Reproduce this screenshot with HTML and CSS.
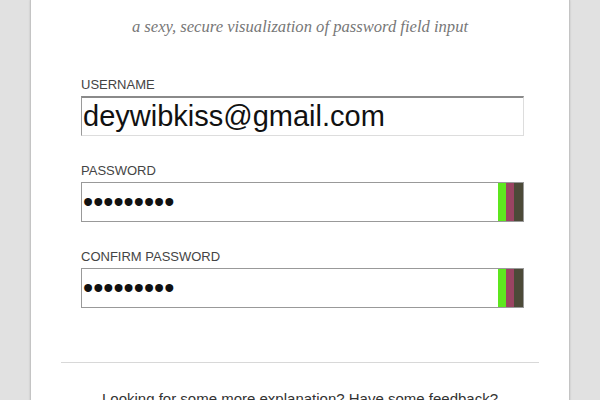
FILE: index.html
```html
<!DOCTYPE html>
<html>
<head>
<meta charset="utf-8">
<link rel="stylesheet" href="styles.css">
</head>
<body>
<div class="panel">
  <p class="tagline">a sexy, secure visualization of password field input</p>
  <form class="form">
    <div class="group">
      <label class="label">USERNAME</label>
      <div class="field field-plain">
        <input class="input" type="text" value="deywibkiss@gmail.com">
      </div>
    </div>
    <div class="group">
      <label class="label">PASSWORD</label>
      <div class="field">
        <input class="input" type="password" value="secret123">
        <div class="bars"><span class="bar bar-green"></span><span class="bar bar-pink"></span><span class="bar bar-olive"></span></div>
      </div>
    </div>
    <div class="group">
      <label class="label">CONFIRM PASSWORD</label>
      <div class="field">
        <input class="input" type="password" value="secret123">
        <div class="bars"><span class="bar bar-green"></span><span class="bar bar-pink"></span><span class="bar bar-olive"></span></div>
      </div>
    </div>
  </form>
  <hr class="divider">
  <p class="footer-text">Looking for some more explanation? Have some feedback?</p>
</div>
</body>
</html>
```
FILE: styles.css
```css
html, body {
  margin: 0;
  padding: 0;
}
body {
  background: #e1e1e1;
  font-family: "Liberation Sans", Arial, sans-serif;
  height: 400px;
  overflow: hidden;
}
.panel {
  width: 538px;
  margin: 0 auto;
  background: #fff;
  border-left: 1px solid #c4c4c4;
  border-right: 1px solid #c4c4c4;
  box-shadow: 0 0 2px rgba(0,0,0,0.15);
  height: 400px;
  padding-top: 17px;
  box-sizing: content-box;
}
.tagline {
  margin: 0;
  text-align: center;
  font-family: "Liberation Serif", Georgia, serif;
  font-style: italic;
  font-size: 16.6px;
  color: #777;
  line-height: 20px;
}
.form {
  padding: 0 45px 0 50px;
  margin-top: 40px;
}
.group {
  margin-bottom: 27px;
}
.group:last-child {
  margin-bottom: 0;
}
.label {
  display: block;
  font-size: 13px;
  color: #444;
  line-height: 15px;
  margin-bottom: 4px;
}
.field {
  display: flex;
  height: 38px;
  border: 1px solid #999;
  width: 441px;
}
.field-plain {
  border-top: 2px solid #8a8a8a;
  border-left: 1px solid #9a9a9a;
  border-right: 1px solid #ddd;
  border-bottom: 1px solid #ddd;
  height: 37px;
}
.input {
  flex: 1;
  min-width: 0;
  border: none;
  outline: none;
  padding: 0 1px;
  margin: 0;
  font-family: "Liberation Sans", Arial, sans-serif;
  font-size: 29px;
  color: #111;
  background: transparent;
}
.bars {
  display: flex;
}
.bar {
  width: 8px;
  height: 100%;
}
.bar-green { background: #5ee61e; }
.bar-pink { background: #9a4462; }
.bar-olive { background: #4c4a38; width: 9px; }
.divider {
  border: none;
  border-top: 1px solid #d8d8d8;
  margin: 54px 30px 0 30px;
}
.footer-text {
  margin: 27px 0 0;
  text-align: center;
  font-size: 15px;
  color: #333;
}
```
